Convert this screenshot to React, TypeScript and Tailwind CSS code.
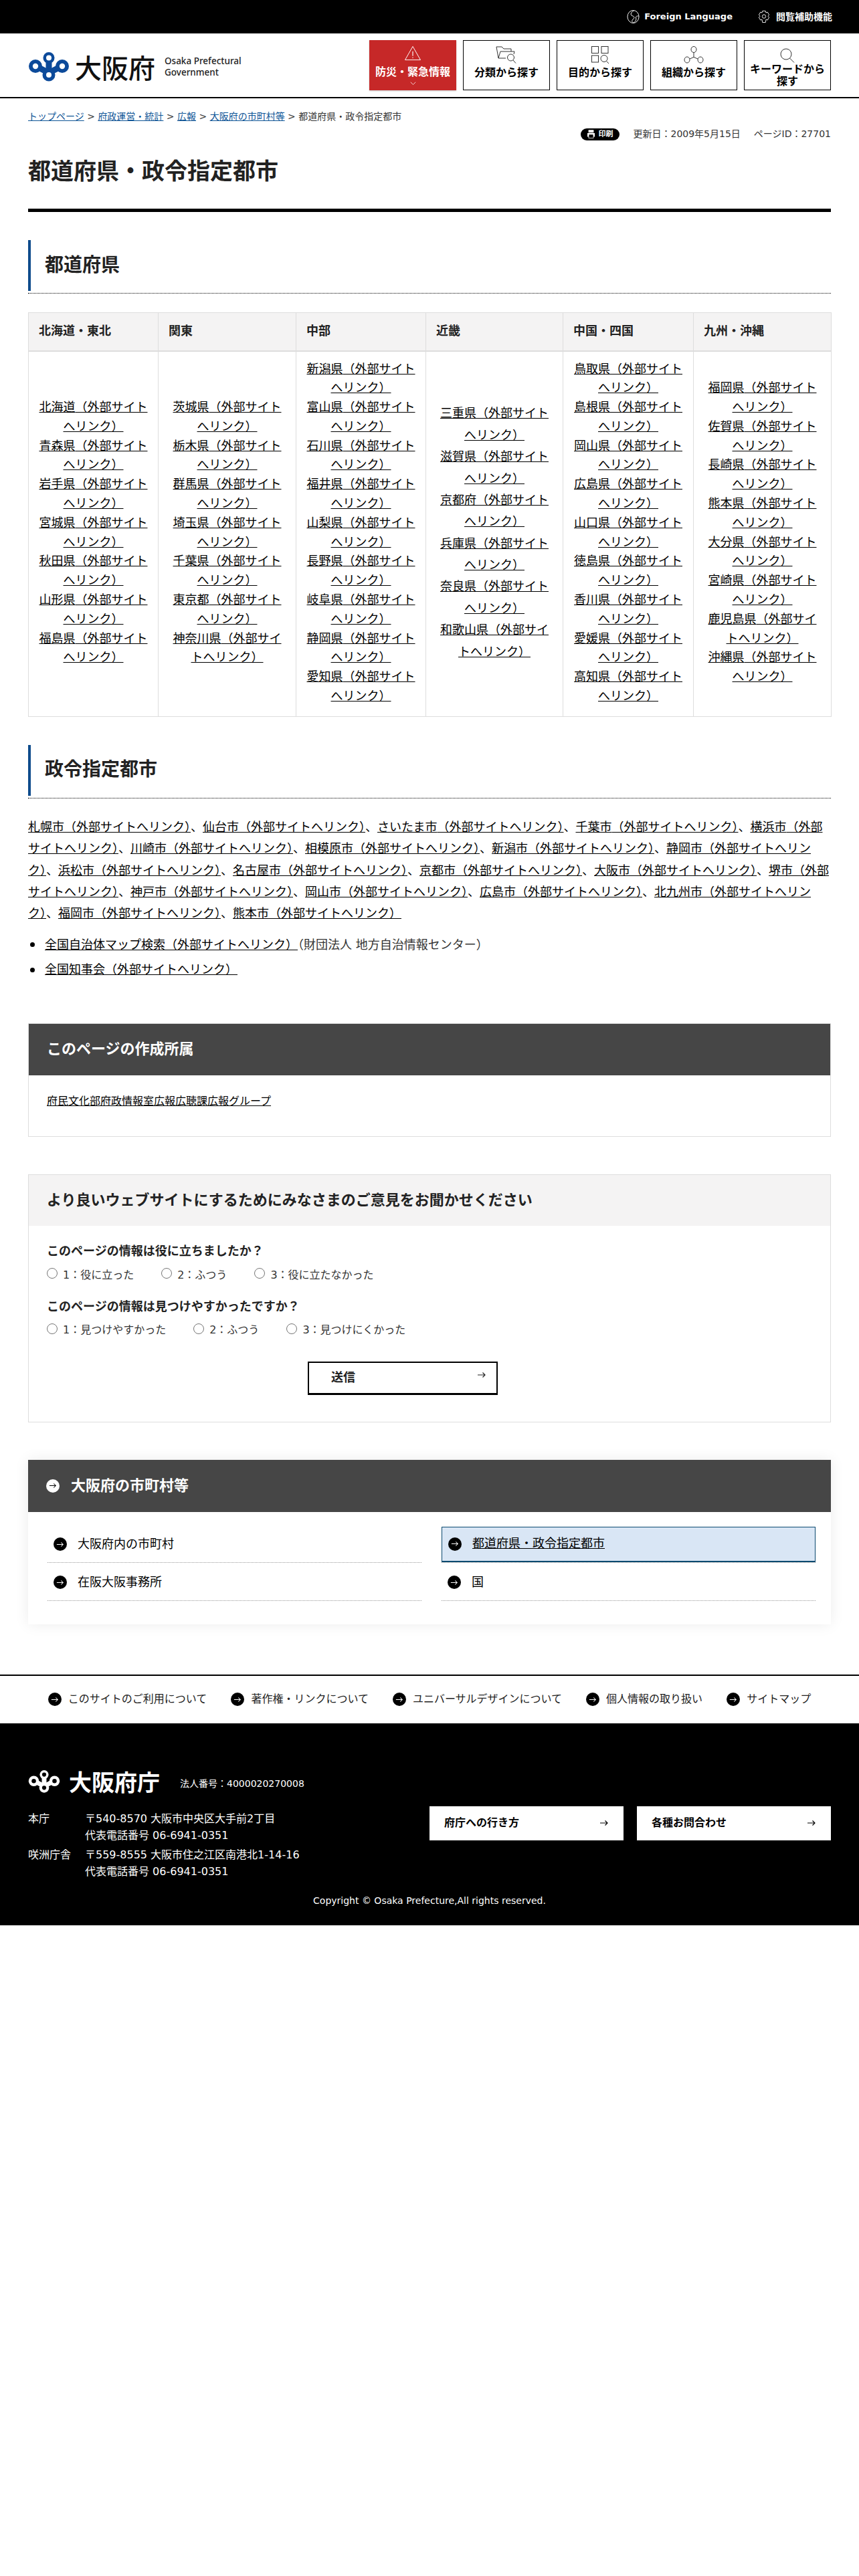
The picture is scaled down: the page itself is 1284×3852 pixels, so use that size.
import React from "react";

const FONT = "[font-family:'DejaVu_Sans','Noto_Sans_CJK_JP',sans-serif]";
const CJK = "[font-family:'Noto_Sans_CJK_JP',sans-serif]";

function Logo({ color, hole, className }: { color: string; hole: string; className: string }) {
  return (
    <svg viewBox="0 0 62 44" className={className} aria-hidden="true">
      <g stroke={color} strokeWidth="9" strokeLinecap="round">
        <line x1="31" y1="9" x2="31" y2="33" />
        <line x1="12" y1="21" x2="31" y2="31" />
        <line x1="50" y1="21" x2="31" y2="31" />
      </g>
      <circle cx="31" cy="8.5" r="8.5" fill={color} />
      <circle cx="11" cy="21" r="10" fill={color} />
      <circle cx="51" cy="21" r="10" fill={color} />
      <circle cx="31" cy="34" r="9.5" fill={color} />
      <circle cx="31" cy="8.5" r="4" fill={hole} />
      <circle cx="11" cy="21" r="4.2" fill={hole} />
      <circle cx="51" cy="21" r="4.2" fill={hole} />
      <circle cx="31" cy="34" r="4" fill={hole} />
    </svg>
  );
}

function ArrowLine({ className }: { className: string }) {
  return (
    <svg viewBox="0 0 14 10" className={className} fill="none" stroke="currentColor" strokeWidth="1.2" aria-hidden="true">
      <path d="M1 5h11M8.5 1.5 12 5 8.5 8.5" />
    </svg>
  );
}

function Dot({ light = false }: { light?: boolean }) {
  return (
    <span className={`flex h-5 w-5 shrink-0 items-center justify-center rounded-full ${light ? "bg-white text-black" : "bg-black text-white"}`}>
      <ArrowLine className="w-3 h-[9px]" />
    </span>
  );
}

function IconAlert() {
  return (
    <svg viewBox="0 0 26 24" className="h-[23px] w-[26px]" fill="none" stroke="white" strokeWidth="1" aria-hidden="true">
      <path d="M13 1.5 1 22.5h24z" />
      <path d="M13 9v7.5M13 18.5v1.2" strokeWidth="1.2" />
    </svg>
  );
}
function IconFolder() {
  return (
    <svg viewBox="0 0 32 26" className="h-[26px] w-[32px]" fill="none" stroke="#333" strokeWidth="1" aria-hidden="true">
      <path d="M1 1h8l3 3h11v4" />
      <path d="M1 1l3 17h11M4 18 7 8h21l-1 4" />
      <circle cx="22.5" cy="17" r="5" />
      <path d="m26 21 4 4.5" />
    </svg>
  );
}
function IconGrid() {
  return (
    <svg viewBox="0 0 27 26" className="h-[26px] w-[27px]" fill="none" stroke="#333" strokeWidth="1" aria-hidden="true">
      <rect x="0.5" y="0.5" width="10" height="10" />
      <rect x="15" y="0.5" width="10" height="10" />
      <rect x="0.5" y="14" width="10" height="10" />
      <circle cx="19" cy="18.5" r="5" />
      <path d="m22.5 22.5 3.5 3.5" />
    </svg>
  );
}
function IconOrg() {
  return (
    <svg viewBox="0 0 30 26" className="h-[26px] w-[30px]" fill="none" stroke="#333" strokeWidth="1" aria-hidden="true">
      <ellipse cx="15" cy="5" rx="4" ry="4.5" />
      <ellipse cx="5" cy="20.5" rx="4" ry="4.5" />
      <ellipse cx="25" cy="20.5" rx="4" ry="4.5" />
      <path d="M15 9.5v7M15 16.5 9 19M15 16.5l6 2.5" />
    </svg>
  );
}
function IconSearch() {
  return (
    <svg viewBox="0 0 22 22" className="h-[22px] w-[22px]" fill="none" stroke="#333" strokeWidth="1" aria-hidden="true">
      <circle cx="9" cy="9" r="8" />
      <path d="m14.5 15 6.5 6.5" />
    </svg>
  );
}
function IconGlobe() {
  return (
    <svg viewBox="0 0 20 22" className="h-[22px] w-[19px]" fill="none" stroke="white" strokeWidth="1" aria-hidden="true">
      <ellipse cx="10" cy="11" rx="9" ry="10" />
      <path d="M11 1.5C8 3 6 5 6.5 7.5s4 2 5 4-2 3-3 5 0 3 1.5 4c3-1 4-3 4.5-5s-1-3 0-4.5 3-1 4-1" />
    </svg>
  );
}
function IconGear() {
  return (
    <svg viewBox="0 0 20 22" className="h-[22px] w-[18px]" fill="none" stroke="white" strokeWidth="1" aria-hidden="true">
      <path d="M7.5 1.5h5l.8 2.8 2.7-.8 2.5 4.5-2 2 2 2-2.5 4.5-2.7-.8-.8 4.8h-5l-.8-4.8-2.7.8L1.500 12l2-2-2-2L4 3.500l2.700.8z" />
      <circle cx="10" cy="10.500" r="3" />
    </svg>
  );
}

function NavButton({ icon, label, iconBox }: { icon: React.ReactNode; label: React.ReactNode; iconBox: string }) {
  return (
    <a className="flex h-[75px] w-[130px] flex-col items-center border border-black bg-white text-center text-[16px] font-bold leading-[18px] text-black">
      <span className={`flex items-center justify-center ${iconBox}`}>{icon}</span>
      <span>{label}</span>
    </a>
  );
}

function Heading2({ children }: { children: React.ReactNode }) {
  return (
    <div className="border-b border-dotted border-black pb-[3px]">
      <h2 className="flex h-[76px] items-center border-l-4 border-[#0f4c8c] pl-[21px] text-[28px] font-bold text-[#222]">{children}</h2>
    </div>
  );
}

const columns: { head: string; prefs: string[]; wide?: boolean }[] = [
  { head: "北海道・東北", prefs: ["北海道", "青森県", "岩手県", "宮城県", "秋田県", "山形県", "福島県"] },
  { head: "関東", prefs: ["茨城県", "栃木県", "群馬県", "埼玉県", "千葉県", "東京都", "神奈川県"] },
  { head: "中部", prefs: ["新潟県", "富山県", "石川県", "福井県", "山梨県", "長野県", "岐阜県", "静岡県", "愛知県"] },
  { head: "近畿", prefs: ["三重県", "滋賀県", "京都府", "兵庫県", "奈良県", "和歌山県"], wide: true },
  { head: "中国・四国", prefs: ["鳥取県", "島根県", "岡山県", "広島県", "山口県", "徳島県", "香川県", "愛媛県", "高知県"] },
  { head: "九州・沖縄", prefs: ["福岡県", "佐賀県", "長崎県", "熊本県", "大分県", "宮崎県", "鹿児島県", "沖縄県"] },
];

const cities = ["札幌市", "仙台市", "さいたま市", "千葉市", "横浜市", "川崎市", "相模原市", "新潟市", "静岡市", "浜松市", "名古屋市", "京都市", "大阪市", "堺市", "神戸市", "岡山市", "広島市", "北九州市", "福岡市", "熊本市"];

function RadioRow({ options, gap }: { options: string[]; gap: string }) {
  return (
    <div className={`flex h-[26px] items-center text-[16px] text-[#333] ${gap}`}>
      {options.map((o) => (
        <label key={o} className="flex items-center">
          <input type="radio" className="mr-2 -mt-1 h-4 w-4 appearance-none rounded-full border border-[#767676] bg-white" />
          <span>{o}</span>
        </label>
      ))}
    </div>
  );
}

function NavItem({ label, current = false }: { label: string; current?: boolean }) {
  return (
    <div className="h-[57px] border-b border-dotted border-[#999] pt-[3px]">
      <div className={`flex h-[53px] items-center gap-4 pl-[9px] text-[18px] text-black ${current ? "border border-b-2 border-[#0b4a6f] bg-[#d9e6f5] pl-[8px] underline" : ""}`}>
        <Dot />
        <span>{label}</span>
      </div>
    </div>
  );
}

export default function App() {
  return (
    <div className={`${FONT} min-h-[3852px] bg-white text-[#222] leading-[1.6]`}>
      <div className="flex h-[50px] items-center justify-end gap-[38px] bg-black pr-[40px] text-[14px] font-bold text-white">
        <span className="flex items-center gap-[7px] text-[13px]"><IconGlobe />Foreign Language</span>
        <span className="flex items-center gap-[9px]"><IconGear />閲覧補助機能</span>
      </div>

      <header className="flex h-[97px] items-start justify-between border-b-2 border-black pl-[42px] pr-[42px] pt-[10px]">
        <div className="mt-[15px] flex items-center">
          <Logo color="#0c4a9a" hole="#fff" className="h-[44px] w-[62px]" />
          <span className={`${CJK} ml-[8px] text-[40px] font-medium leading-[50px] text-[#111]`}>大阪府</span>
          <span className="ml-[14px] font-['Noto_Sans'] text-[13.5px] font-medium leading-[17px] text-[#222]">Osaka Prefectural<br />Government</span>
        </div>
        <nav className="flex gap-[10px]">
          <a className="flex h-[75px] w-[130px] flex-col items-center bg-[#c62828] text-center text-[16px] font-bold leading-[18px] text-white shadow-[0_1px_2px_rgba(0,0,0,0.25)]">
            <span className="mt-[8px] flex h-[23px] items-center"><IconAlert /></span>
            <span className="mt-[8px] whitespace-nowrap">防災・緊急情報</span>
            <svg viewBox="0 0 12 8" className="mt-[5px] h-[6px] w-[9px]" fill="none" stroke="white" strokeWidth="1"><path d="m1 1 5 5 5-5" /></svg>
          </a>
          <NavButton icon={<IconFolder />} label="分類から探す" iconBox="mt-[8px] mb-[5px] h-[26px]" />
          <NavButton icon={<IconGrid />} label="目的から探す" iconBox="mt-[8px] mb-[5px] h-[26px]" />
          <NavButton icon={<IconOrg />} label="組織から探す" iconBox="mt-[8px] mb-[5px] h-[26px]" />
          <NavButton icon={<IconSearch />} label={<>キーワードから<br />探す</>} iconBox="mt-[11px] mb-[1px] h-[22px]" />
        </nav>
      </header>

      <main className="px-[42px]">
        <div className="mt-[16px] h-[22px] text-[14px] leading-[22px] text-[#333]">
          <a className="text-[#0f5596] underline">トップページ</a> &gt; <a className="text-[#0f5596] underline">府政運営・統計</a> &gt; <a className="text-[#0f5596] underline">広報</a> &gt; <a className="text-[#0f5596] underline">大阪府の市町村等</a> &gt; 都道府県・政令指定都市
        </div>
        <div className="mt-[5px] flex h-[21px] items-center justify-end text-[14px] text-[#333]">
          <span className="mr-[20px] flex h-[18px] w-[58px] items-center justify-center gap-[5px] rounded-full bg-black text-[11px] font-bold text-white">
            <svg viewBox="0 0 14 16" className="h-[13px] w-[11px]" fill="white"><path d="M2 0h10v5H2zM0 6h14v7h-2v3H2v-3H0zm3 3v6h8V9z" /></svg>
            印刷
          </span>
          <span>更新日：2009年5月15日</span>
          <span className="ml-[20px]">ページID：27701</span>
        </div>
        <h1 className="mt-[21px] border-b-[5px] border-black pb-[32px] text-[34px] font-bold leading-[48px] text-[#222]">都道府県・政令指定都市</h1>

        <div className="mt-[42px]"><Heading2>都道府県</Heading2></div>

        <table className="mt-[28px] w-full table-fixed border-collapse text-[18px]">
          <colgroup>
            <col className="w-[194px]" /><col className="w-[206px]" /><col className="w-[194px]" /><col className="w-[205px]" /><col className="w-[195px]" /><col className="w-[206px]" />
          </colgroup>
          <thead>
            <tr>
              {columns.map((c) => (
                <th key={c.head} className="h-[57px] border border-b-2 border-[#ddd] bg-[#f4f3f3] pl-[15px] text-left align-middle font-bold">{c.head}</th>
              ))}
            </tr>
          </thead>
          <tbody>
            <tr>
              {columns.map((c) => (
                <td key={c.head} className={`border border-[#ddd] px-[15px] pb-[15px] pt-[12px] text-center align-middle text-black ${c.wide ? "leading-[1.8]" : "leading-[1.6]"}`}>
                  {c.prefs.map((p) => (
                    <div key={p}><a className="underline">{p}（外部サイトへリンク）</a></div>
                  ))}
                </td>
              ))}
            </tr>
          </tbody>
        </table>

        <div className="mt-[42px]"><Heading2>政令指定都市</Heading2></div>

        <p className="mt-[27px] text-[18px] leading-[1.8] text-black">
          {cities.map((c, i) => (
            <React.Fragment key={c}>
              <a className="underline">{c}（外部サイトへリンク）</a>{i < cities.length - 1 ? "、" : ""}
            </React.Fragment>
          ))}
        </p>
        <ul className="mt-[14px] flex flex-col gap-[5px] text-[18px] leading-[1.8] text-black">
          <li className="flex items-center">
            <span className="ml-[3px] mr-[15px] h-[7px] w-[7px] rounded-full bg-black" />
            <span><a className="underline">全国自治体マップ検索（外部サイトへリンク）</a><span className="text-[#333]">（財団法人 地方自治情報センター）</span></span>
          </li>
          <li className="flex items-center">
            <span className="ml-[3px] mr-[15px] h-[7px] w-[7px] rounded-full bg-black" />
            <a className="underline">全国知事会（外部サイトへリンク）</a>
          </li>
        </ul>

        <section className="mt-[63px] h-[170px] border border-[#ddd]">
          <h2 className="flex h-[77px] items-center bg-[#464646] pl-[27px] text-[22px] font-bold text-white">このページの作成所属</h2>
          <p className="mt-[26px] pl-[27px] text-[16px] text-black"><a className="underline">府民文化部府政情報室広報広聴課広報グループ</a></p>
        </section>

        <section className="mt-[56px] h-[371px] border border-[#ddd]">
          <h2 className="flex h-[76px] items-center bg-[#f4f3f3] pl-[27px] text-[22px] font-bold text-[#222]">より良いウェブサイトにするためにみなさまのご意見をお聞かせください</h2>
          <div className="pl-[27px]">
            <h3 className="mt-[24px] text-[18px] font-bold">このページの情報は役に立ちましたか？</h3>
            <div className="mt-[8px]"><RadioRow options={["1：役に立った", "2：ふつう", "3：役に立たなかった"]} gap="gap-[41px]" /></div>
            <h3 className="mt-[21px] text-[18px] font-bold">このページの情報は見つけやすかったですか？</h3>
            <div className="mt-[7px]"><RadioRow options={["1：見つけやすかった", "2：ふつう", "3：見つけにくかった"]} gap="gap-[41px]" /></div>
            <button className="relative mt-[34px] ml-[390px] flex h-[50px] w-[284px] items-center border-2 border-b-[3px] border-black pl-[33px] text-[18px] font-bold">
              送信
              <ArrowLine className="absolute right-[15px] top-[13px] h-[10px] w-[14px]" />
            </button>
          </div>
        </section>

        <section className="mt-[56px] h-[246px] bg-white shadow-[0_0_20px_rgba(0,0,0,0.08)]">
          <h2 className="flex h-[78px] items-center gap-[17px] bg-[#464646] pl-[27px] text-[22px] font-bold text-white">
            <Dot light />大阪府の市町村等
          </h2>
          <div className="grid grid-cols-[559px_559px] gap-x-[30px] pl-[29px] pt-[19px]">
            <NavItem label="大阪府内の市町村" />
            <NavItem label="都道府県・政令指定都市" current />
            <NavItem label="在阪大阪事務所" />
            <NavItem label="国" />
          </div>
        </section>
      </main>

      <div className="mt-[75px] border-t-2 border-black">
        <div className="flex h-[71px] items-center justify-center gap-[36px] text-[16px] text-[#222]">
          {["このサイトのご利用について", "著作権・リンクについて", "ユニバーサルデザインについて", "個人情報の取り扱い", "サイトマップ"].map((t) => (
            <span key={t} className="flex items-center gap-[10px]"><Dot />{t}</span>
          ))}
        </div>
      </div>

      <footer className="bg-black px-[42px] pb-[26px] pt-[69px] text-white">
        <div className="flex h-[36px] items-center">
          <Logo color="#fff" hole="#000" className="h-[36px] w-[48px]" />
          <span className={`${CJK} ml-[13px] text-[34px] font-bold leading-[36px]`}>大阪府庁</span>
          <span className="ml-[30px] mt-[8px] text-[14px]">法人番号：4000020270008</span>
        </div>
        <div className="mt-[19px] flex items-start justify-between">
          <div className="pt-[6px] text-[16px]">
            <div className="flex"><span className="w-[85px]">本庁</span><span>〒540-8570 大阪市中央区大手前2丁目<br />代表電話番号 06-6941-0351</span></div>
            <div className="mt-[3px] flex"><span className="w-[85px]">咲洲庁舎</span><span>〒559-8555 大阪市住之江区南港北1-14-16<br />代表電話番号 06-6941-0351</span></div>
          </div>
          <div className="flex gap-[20px]">
            {["府庁への行き方", "各種お問合わせ"].map((t) => (
              <a key={t} className="relative flex h-[51px] w-[290px] items-center bg-white pl-[22px] text-[16px] font-bold text-black">
                {t}
                <ArrowLine className="absolute right-[22px] top-[20px] h-[10px] w-[14px]" />
              </a>
            ))}
          </div>
        </div>
        <p className="mt-[19px] text-center text-[14px] leading-[22px]">Copyright © Osaka Prefecture,All rights reserved.</p>
      </footer>
    </div>
  );
}
